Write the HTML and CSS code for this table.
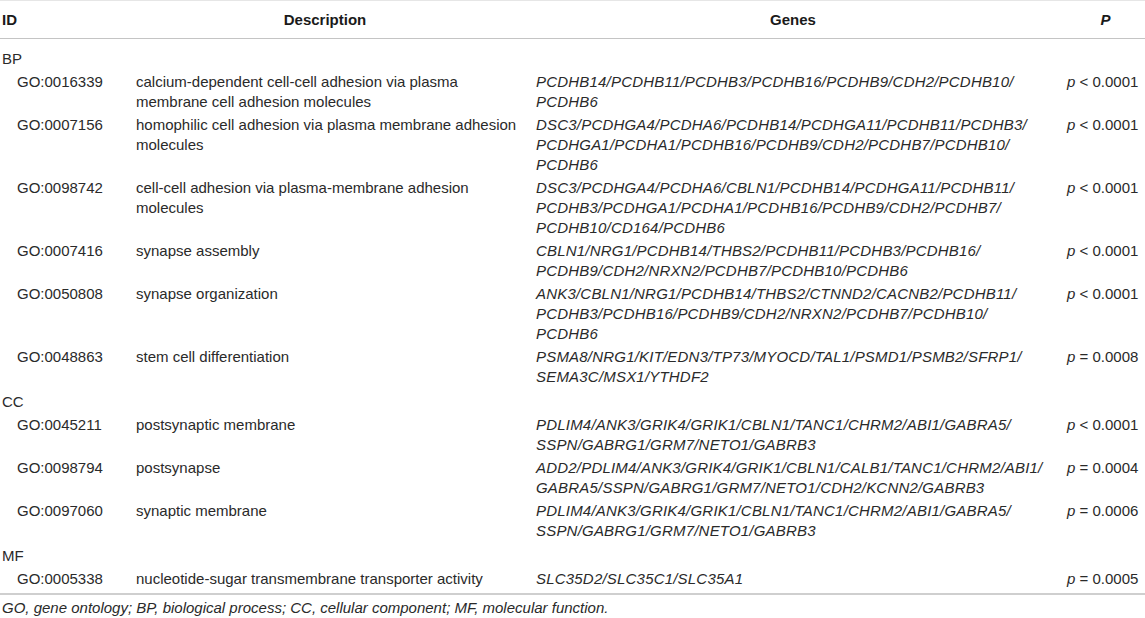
FILE: index.html
```html
<!DOCTYPE html>
<html>
<head>
<meta charset="utf-8">
<link rel="stylesheet" href="styles.css">
</head>
<body>
<table class="go-table">
  <colgroup>
    <col class="c-id"><col class="c-desc"><col class="c-genes"><col class="c-p">
  </colgroup>
  <thead>
    <tr>
      <th class="h-id">ID</th>
      <th>Description</th>
      <th class="h-genes">Genes</th>
      <th><i>P</i></th>
    </tr>
  </thead>
  <tbody>
    <tr class="section first"><td colspan="4">BP</td></tr>
    <tr>
      <td class="id">GO:0016339</td>
      <td class="desc">calcium-dependent cell-cell adhesion via plasma<br>membrane cell adhesion molecules</td>
      <td class="genes">PCDHB14/PCDHB11/PCDHB3/PCDHB16/PCDHB9/CDH2/PCDHB10/<br>PCDHB6</td>
      <td class="pval"><i>p</i> &lt; 0.0001</td>
    </tr>
    <tr>
      <td class="id">GO:0007156</td>
      <td class="desc">homophilic cell adhesion via plasma membrane adhesion<br>molecules</td>
      <td class="genes">DSC3/PCDHGA4/PCDHA6/PCDHB14/PCDHGA11/PCDHB11/PCDHB3/<br>PCDHGA1/PCDHA1/PCDHB16/PCDHB9/CDH2/PCDHB7/PCDHB10/<br>PCDHB6</td>
      <td class="pval"><i>p</i> &lt; 0.0001</td>
    </tr>
    <tr>
      <td class="id">GO:0098742</td>
      <td class="desc">cell-cell adhesion via plasma-membrane adhesion<br>molecules</td>
      <td class="genes">DSC3/PCDHGA4/PCDHA6/CBLN1/PCDHB14/PCDHGA11/PCDHB11/<br>PCDHB3/PCDHGA1/PCDHA1/PCDHB16/PCDHB9/CDH2/PCDHB7/<br>PCDHB10/CD164/PCDHB6</td>
      <td class="pval"><i>p</i> &lt; 0.0001</td>
    </tr>
    <tr>
      <td class="id">GO:0007416</td>
      <td class="desc">synapse assembly</td>
      <td class="genes">CBLN1/NRG1/PCDHB14/THBS2/PCDHB11/PCDHB3/PCDHB16/<br>PCDHB9/CDH2/NRXN2/PCDHB7/PCDHB10/PCDHB6</td>
      <td class="pval"><i>p</i> &lt; 0.0001</td>
    </tr>
    <tr>
      <td class="id">GO:0050808</td>
      <td class="desc">synapse organization</td>
      <td class="genes">ANK3/CBLN1/NRG1/PCDHB14/THBS2/CTNND2/CACNB2/PCDHB11/<br>PCDHB3/PCDHB16/PCDHB9/CDH2/NRXN2/PCDHB7/PCDHB10/<br>PCDHB6</td>
      <td class="pval"><i>p</i> &lt; 0.0001</td>
    </tr>
    <tr>
      <td class="id">GO:0048863</td>
      <td class="desc">stem cell differentiation</td>
      <td class="genes">PSMA8/NRG1/KIT/EDN3/TP73/MYOCD/TAL1/PSMD1/PSMB2/SFRP1/<br>SEMA3C/MSX1/YTHDF2</td>
      <td class="pval"><i>p</i> = 0.0008</td>
    </tr>
    <tr class="section"><td colspan="4">CC</td></tr>
    <tr>
      <td class="id">GO:0045211</td>
      <td class="desc">postsynaptic membrane</td>
      <td class="genes">PDLIM4/ANK3/GRIK4/GRIK1/CBLN1/TANC1/CHRM2/ABI1/GABRA5/<br>SSPN/GABRG1/GRM7/NETO1/GABRB3</td>
      <td class="pval"><i>p</i> &lt; 0.0001</td>
    </tr>
    <tr>
      <td class="id">GO:0098794</td>
      <td class="desc">postsynapse</td>
      <td class="genes">ADD2/PDLIM4/ANK3/GRIK4/GRIK1/CBLN1/CALB1/TANC1/CHRM2/ABI1/<br>GABRA5/SSPN/GABRG1/GRM7/NETO1/CDH2/KCNN2/GABRB3</td>
      <td class="pval"><i>p</i> = 0.0004</td>
    </tr>
    <tr>
      <td class="id">GO:0097060</td>
      <td class="desc">synaptic membrane</td>
      <td class="genes">PDLIM4/ANK3/GRIK4/GRIK1/CBLN1/TANC1/CHRM2/ABI1/GABRA5/<br>SSPN/GABRG1/GRM7/NETO1/GABRB3</td>
      <td class="pval"><i>p</i> = 0.0006</td>
    </tr>
    <tr class="section"><td colspan="4">MF</td></tr>
    <tr class="last">
      <td class="id">GO:0005338</td>
      <td class="desc">nucleotide-sugar transmembrane transporter activity</td>
      <td class="genes">SLC35D2/SLC35C1/SLC35A1</td>
      <td class="pval"><i>p</i> = 0.0005</td>
    </tr>
  </tbody>
</table>
<p class="footnote">GO, gene ontology; BP, biological process; CC, cellular component; MF, molecular function.</p>
</body>
</html>
```

FILE: styles.css
```css
html, body {
  margin: 0;
  padding: 0;
  background: #ffffff;
}

body {
  font-family: "Liberation Sans", Arial, Helvetica, sans-serif;
  font-size: 15px;
  color: #2a2a2a;
}

.go-table {
  width: 1145px;
  border-collapse: collapse;
  table-layout: fixed;
  border-top: 1px solid #e6e6e6;
}

.c-id { width: 134px; }
.c-desc { width: 382px; }
.c-genes { width: 550px; }
.c-p { width: 79px; }

.go-table th {
  font-weight: bold;
  color: #1a1a1a;
  text-align: center;
  height: 37px;
  padding: 0;
  line-height: 20px;
  border-bottom: 1px solid #c4c4c4;
}

.go-table th.h-id {
  text-align: left;
  padding-left: 2px;
}

.go-table th.h-genes {
  padding-left: 20px;
  padding-right: 16px;
}

.go-table td {
  line-height: 20px;
  padding: 1px 2px 2px;
  vertical-align: top;
  white-space: nowrap;
}

.go-table tr.section td {
  padding-left: 2px;
  padding-top: 3px;
}

.go-table tr.section.first td {
  padding-top: 10px;
}

.go-table td.id {
  padding-left: 17px;
}

.go-table td.genes {
  font-style: italic;
  letter-spacing: 0.2px;
  padding-left: 20px;
}

.go-table td.pval {
  padding-left: 1px;
}

.go-table tr.last td {
  padding-bottom: 4px;
  border-bottom: 2px solid #cfcfcf;
}

.footnote {
  margin: 4px 0 0 2px;
  font-style: italic;
  font-size: 15px;
  line-height: 18px;
}
```
